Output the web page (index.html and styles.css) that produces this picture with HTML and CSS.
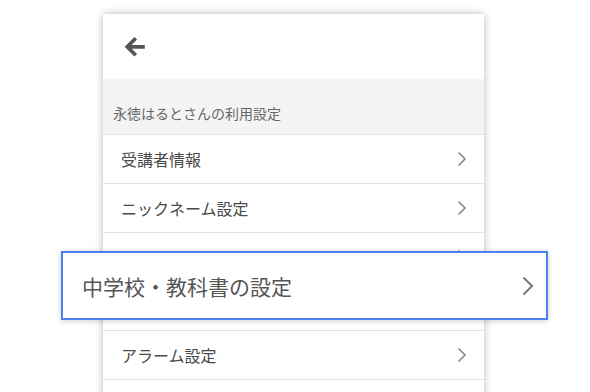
FILE: index.html
```html
<!DOCTYPE html>
<html lang="ja">
<head>
    <meta charset="UTF-8">
    <meta name="viewport" content="width=device-width, initial-scale=1.0">
    <title>利用設定</title>
    <link rel="stylesheet" href="styles.css">
</head>
<body>
    <div class="card">
        <div class="header">
            <svg class="back" viewBox="3.4 3.4 17.6 17.6" width="22" height="22">
                <path d="M20 12H6.5 M12.8 5.2l-6.8 6.8 6.8 6.8" fill="none" stroke="#555" stroke-width="3"/>
            </svg>
        </div>
        <div class="section">永徳はるとさんの利用設定</div>
        <ul class="menu">
            <li><span>受講者情報</span><svg class="chev" viewBox="0 0 10 16"><path d="M1.5 1.5 L8 8 L1.5 14.5"/></svg></li>
            <li><span>ニックネーム設定</span><svg class="chev" viewBox="0 0 10 16"><path d="M1.5 1.5 L8 8 L1.5 14.5"/></svg></li>
            <!-- covered by the highlighted copy below -->
            <li class="covered"><span></span><svg class="chev" viewBox="0 0 10 16"><path d="M1.5 1.5 L8 8 L1.5 14.5"/></svg></li>
            <li class="covered"><span></span></li>
            <li><span>アラーム設定</span><svg class="chev" viewBox="0 0 10 16"><path d="M1.5 1.5 L8 8 L1.5 14.5"/></svg></li>
            <li><span></span></li>
        </ul>
    </div>

    <!-- highlighted row -->
    <div class="focus">
        <span>中学校・教科書の設定</span>
        <svg viewBox="0 0 12 20" width="12" height="20">
            <path d="M1.5 1.5 L10 10 L1.5 18.5" fill="none" stroke="#777" stroke-width="2"/>
        </svg>
    </div>
</body>
</html>
```

FILE: styles.css
```css
body {
    margin: 0;
    padding: 0;
    background-color: #fff;
    font-family: "Noto Sans CJK JP", "Noto Sans", sans-serif;
    overflow: hidden;
}
.card {
    width: 381px;
    margin: 14px 0 0 103px;
    background-color: #fff;
    box-shadow: 0 0 8px rgba(0, 0, 0, 0.28);
}
.header {
    height: 65px;
    display: flex;
    align-items: center;
    padding-left: 21px;
}
.back {
    display: block;
}
.section {
    height: 56px;
    box-sizing: border-box;
    padding: 24px 0 0 10px;
    background-color: #f4f4f4;
    border-bottom: 1px solid #e2e2e2;
    font-size: 14px;
    color: #666;
}
.menu {
    list-style: none;
    margin: 0;
    padding: 0;
}
.menu li {
    height: 48px;
    display: flex;
    align-items: center;
    justify-content: space-between;
    padding: 0 17px 0 18px;
    border-bottom: 1px solid #e2e2e2;
    font-size: 16px;
    color: #4a4a4a;
}
.chev {
    display: block;
    width: 10px;
    height: 16px;
    fill: none;
    stroke: #888;
    stroke-width: 1.6;
}
.focus {
    position: absolute;
    left: 61px;
    top: 251px;
    width: 452px;
    height: 65px;
    border: 2px solid #4b80ef;
    background-color: #fff;
    box-shadow: 0 1px 6px rgba(0, 0, 0, 0.2);
    display: flex;
    align-items: center;
    justify-content: space-between;
    padding: 0 12px 0 19px;
    font-size: 21px;
    color: #555;
}
.focus svg {
    display: block;
}
```
